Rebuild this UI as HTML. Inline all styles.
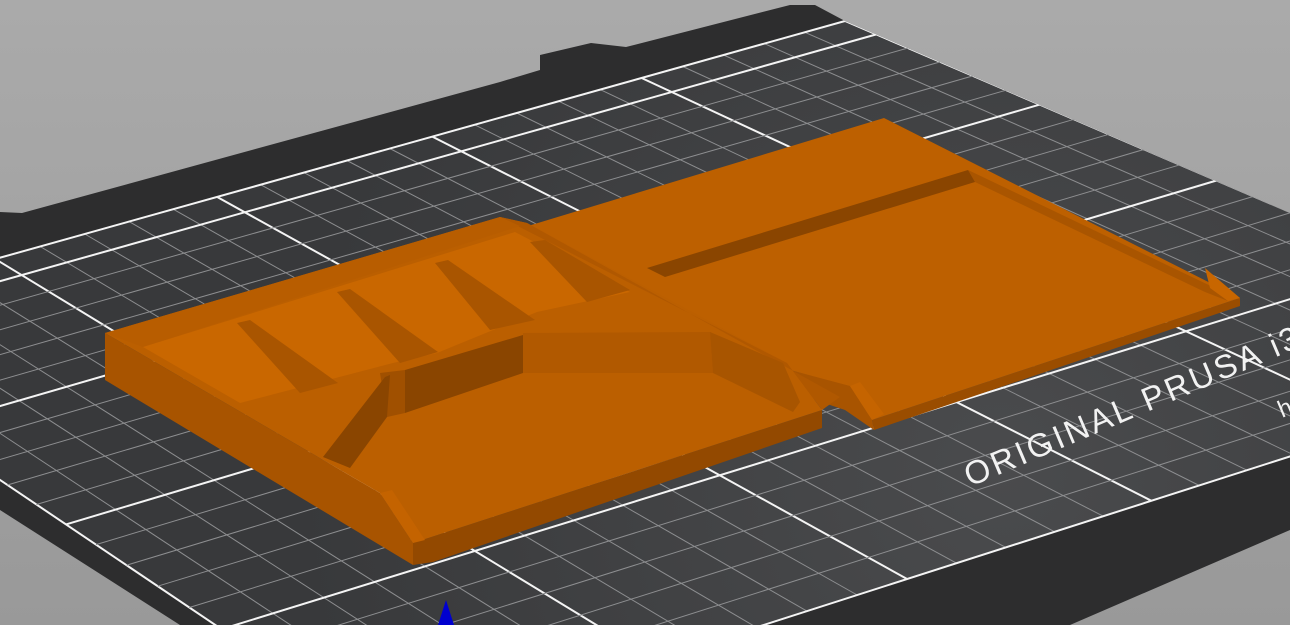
<!DOCTYPE html>
<html><head><meta charset="utf-8"><style>
html,body{margin:0;padding:0;width:1290px;height:625px;overflow:hidden;background:#a3a3a3}
svg{display:block}
</style></head><body>
<svg id="s" width="1290" height="625" viewBox="0 0 1290 625" xmlns="http://www.w3.org/2000/svg">
<defs>
<linearGradient id="bg" x1="0" y1="0" x2="0" y2="1"><stop offset="0" stop-color="#aaaaaa"/><stop offset="1" stop-color="#999999"/></linearGradient>
<radialGradient id="gf" cx="1000" cy="470" r="700" gradientUnits="userSpaceOnUse"><stop offset="0" stop-color="#4a4b4d"/><stop offset="1" stop-color="#38393b"/></radialGradient>
<clipPath id="bedclip"><polygon points="0,212 22,213 500,82 540,70 540,55 591,43 626,47 790,5 815,5 845,21 1290,213 1290,530 1070,625 180,625 0,510"/></clipPath>
</defs>
<rect width="1290" height="625" fill="url(#bg)"/>
<polygon fill="#2d2d2e" points="0,212 22,213 500,82 540,70 540,55 591,43 626,47 790,5 815,5 845,21 1290,213 1290,530 1070,625 180,625 0,510"/>
<g clip-path="url(#bedclip)">
<polygon id="gridfill" fill="url(#gf)" points="0,0"/>
<g id="grid"></g>
</g>
<text x="0" y="0" transform="translate(970,487) rotate(-23)" font-family="Liberation Sans, sans-serif" font-size="33" fill="#f2f2f2" letter-spacing="3">ORIGINAL PRUSA i3</text>
<text x="0" y="0" transform="translate(1282,418) rotate(-23)" font-family="Liberation Sans, sans-serif" font-size="24" fill="#f2f2f2">h</text>

<polygon fill="#9a4d00" points="1240,298 1240,306 874,430 872,420"/>
<polygon fill="#a85400" points="790,370 850,385 872,420 874,430 845,410 800,395"/>
<polygon fill="#bd6000" points="528,226 884,118 1240,298 872,420 850,386 790,370"/>
<polygon fill="#c56400" points="850,386 860,382 884,414 872,420"/>
<polygon fill="#a95500" points="968,170 1215,288 1240,298 1228,301 1205,292 975,182"/>
<polygon fill="#c86600" points="1205,268 1240,298 1228,301 1210,288"/>
<polygon fill="#8a4500" points="647,268 968,170 975,182 665,277"/>

<polygon fill="#a85400" points="105,333 380,493 413,543 413,565 105,380"/>
<polygon fill="#934900" points="413,543 822,410 822,428 433,562 413,565"/>
<polygon fill="#bb5f00" points="105,333 500,217 527,223 787,363 822,410 413,543 380,493"/>
<polygon fill="#b05800" points="500,217 527,223 840,397 822,410 787,363"/>
<polygon fill="#c46300" points="380,493 392,490 425,540 413,543"/>
<polygon fill="#b85d00" points="105,333 500,217 520,226 143,347"/>
<polygon fill="#c96700" points="143,347 515,232 630,292 537,312 437,353 393,363 240,403"/>
<polygon fill="#a95500" points="237,323 250,320 338,383 300,393"/>
<polygon fill="#a95500" points="337,292 350,289 438,352 400,363"/>
<polygon fill="#a95500" points="435,263 448,260 535,320 490,330"/>
<polygon fill="#a95500" points="530,242 545,240 630,290 587,302"/>
<polygon fill="#b15900" points="523,333 710,332 713,373 523,373"/>
<polygon fill="#a85500" points="710,332 783,363 800,402 793,412 713,373"/>
<polygon fill="#8a4500" points="405,370 523,335 523,373 405,413"/>
<polygon fill="#a05000" points="380,373 405,370 405,413 387,417"/>
<polygon fill="#8a4500" points="385,377 390,375 387,417 350,468 323,457"/>

<polygon fill="#0000d0" points="446,600 438,625 454,625"/>
</svg>
<script>
(function(){
var P=[[392,744],[1616,352],[845,21],[-233,323]];
var x0=P[0][0],y0=P[0][1],x1=P[1][0],y1=P[1][1],x2=P[2][0],y2=P[2][1],x3=P[3][0],y3=P[3][1];
var dx1=x1-x2,dx2=x3-x2,dx3=x0-x1+x2-x3,dy1=y1-y2,dy2=y3-y2,dy3=y0-y1+y2-y3;
var den=dx1*dy2-dx2*dy1;
var g=(dx3*dy2-dx2*dy3)/den,h=(dx1*dy3-dx3*dy1)/den;
var a=x1-x0+g*x1,b=x3-x0+h*x3,c=x0,d=y1-y0+g*y1,e=y3-y0+h*y3,f=y0;
function m(u,v){var w=g*u+h*v+1;return [(a*u+b*v+c)/w,(d*u+e*v+f)/w];}
document.getElementById('gridfill').setAttribute('points',P.map(function(p){return p.join(',')}).join(' '));
var G=document.getElementById('grid'),html='';
function ln(p,q,maj){html+='<line x1="'+p[0].toFixed(1)+'" y1="'+p[1].toFixed(1)+'" x2="'+q[0].toFixed(1)+'" y2="'+q[1].toFixed(1)+'" stroke="'+(maj?'#f4f4f4':'#8d8e90')+'" stroke-width="'+(maj?2:1)+'"/>';}
for(var i=0;i<=25;i++){var u=i/25;ln(m(u,0),m(u,1),i%5==0);}
for(var j=0;j<=21;j++){var v=j/21;ln(m(0,v),m(1,v),j%5==0||j==21);}
G.innerHTML=html;
})();
</script>
</body></html>
